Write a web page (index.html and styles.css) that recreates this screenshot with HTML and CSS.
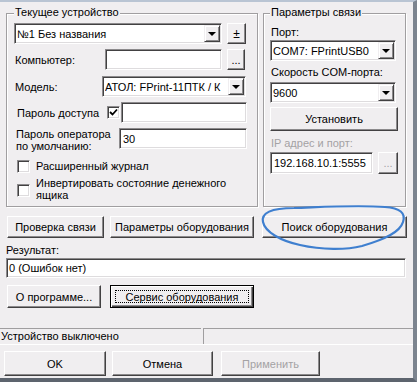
FILE: index.html
```html
<!DOCTYPE html>
<html lang="ru">
<head>
<meta charset="utf-8">
<title>Параметры устройства</title>
<link rel="stylesheet" href="styles.css">
</head>
<body>
<div class="window">
  <svg class="mark" width="417" height="382" viewBox="0 0 417 382" aria-hidden="true">
    <path d="M263 222 C261 213 271 208 294 208 C324 207 356 205 385 207 C400 208 406 213 403 222 C400 232 386 239 362 246 C346 250 322 250 300 245 C281 241 265 232 263 222 Z" fill="none" stroke="#3f7fcf" stroke-width="2.2" stroke-linejoin="round"/>
  </svg>

  <div class="top">
    <div class="group group-left">
      <div class="legend">Текущее устройство</div>
      <div class="row r1">
        <div class="field combo c-device"><span class="ftext">№1 Без названия</span><span class="combo-btn"><i class="tri"></i></span></div>
        <div class="btn b-pm">±</div>
      </div>
      <div class="row r2">
        <div class="lbl l-comp">Компьютер:</div>
        <div class="field f-comp"></div>
        <div class="btn b-dots">...</div>
      </div>
      <div class="row r3">
        <div class="lbl l-model">Модель:</div>
        <div class="field combo c-model"><span class="ftext">АТОЛ: FPrint-11ПТК / К</span><span class="combo-btn"><i class="tri"></i></span></div>
      </div>
      <div class="row r4">
        <div class="lbl l-pass">Пароль доступа</div>
        <span class="check checked"><svg width="9" height="9" viewBox="0 0 9 9"><path d="M1 4 L3.5 6.5 L8 1.5" fill="none" stroke="#000" stroke-width="1.8"/></svg></span>
        <div class="field f-pass"></div>
      </div>
      <div class="row r5">
        <div class="lbl l-oper">Пароль оператора<br>по умолчанию:</div>
        <div class="field f-oper">30</div>
      </div>
      <div class="row r6">
        <span class="check"></span>
        <div class="ctext">Расширенный журнал</div>
      </div>
      <div class="row r7">
        <span class="check c7"></span>
        <div class="ctext two">Инвертировать состояние денежного<br>ящика</div>
      </div>
    </div>

    <div class="group group-right">
      <div class="legend">Параметры связи</div>
      <div class="lbl l-port">Порт:</div>
      <div class="field combo c-port"><span class="ftext">COM7: FPrintUSB0</span><span class="combo-btn"><i class="tri"></i></span></div>
      <div class="lbl l-speed">Скорость COM-порта:</div>
      <div class="field combo c-speed"><span class="ftext">9600</span><span class="combo-btn"><i class="tri"></i></span></div>
      <div class="btn b-set">Установить</div>
      <div class="lbl l-ip disabled">IP адрес и порт:</div>
      <div class="row r-ip">
        <div class="field f-ip">192.168.10.1:5555</div>
        <div class="btn b-ipdots disabled">...</div>
      </div>
    </div>
  </div>

  <div class="btn-row row-a">
    <div class="btn b-check">Проверка связи</div>
    <div class="btn b-params">Параметры оборудования</div>
    <div class="btn b-search">Поиск оборудования</div>
  </div>

  <div class="lbl l-result">Результат:</div>
  <div class="field f-result">0 (Ошибок нет)</div>

  <div class="btn-row row-b">
    <div class="btn b-about">О программе...</div>
    <div class="btn default b-service"><span class="focus">Сервис оборудования</span></div>
  </div>

  <div class="statusbar">
    <div class="panel p1">Устройство выключено</div>
    <div class="panel p2"></div>
  </div>

  <div class="btn-row row-c">
    <div class="btn b-ok">OK</div>
    <div class="btn b-cancel">Отмена</div>
    <div class="btn b-apply disabled">Применить</div>
  </div>
</div>
</body>
</html>
```

FILE: styles.css
```css
html, body {
  margin: 0;
  padding: 0;
}
body {
  width: 417px;
  height: 382px;
  overflow: hidden;
  background: #f0eef0;
  font-family: "Liberation Sans", Arial, sans-serif;
  font-size: 11px;
  color: #000;
}
.window {
  position: relative;
  box-sizing: border-box;
  width: 417px;
  height: 382px;
  border-top: 2px solid #b9c4d3;
  border-right: 4px solid #7c848f;
  border-bottom: 4px solid #5d646e;
  background: #f0eef0;
}
.mark {
  position: absolute;
  left: 0;
  top: -2px;
  pointer-events: none;
  z-index: 5;
}

/* generic */
.row {
  display: flex;
  align-items: center;
}
.lbl {
  line-height: 14px;
  white-space: nowrap;
}
.disabled {
  color: #a4a2a4;
}
.field {
  box-sizing: border-box;
  background: #fff;
  border: 1px solid;
  border-color: #8c8a8c #ffffff #ffffff #8c8a8c;
  box-shadow: inset 1px 1px 0 #424142, inset -1px -1px 0 #dedcde;
  padding-left: 3px;
  display: flex;
  align-items: center;
  overflow: hidden;
  white-space: nowrap;
}
.combo {
  padding-left: 2px;
}
.ftext {
  flex: 1;
  overflow: hidden;
  white-space: nowrap;
}
.combo-btn {
  box-sizing: border-box;
  flex: none;
  width: 16px;
  height: 17px;
  margin-right: 1px;
  background: #f0eef0;
  border: 1px solid;
  border-color: #f0eef0 #424142 #424142 #f0eef0;
  box-shadow: inset 1px 1px 0 #fff, inset -1px -1px 0 #8c8a8c;
  display: flex;
  align-items: center;
  justify-content: center;
}
.tri {
  width: 0;
  height: 0;
  border-left: 4px solid transparent;
  border-right: 4px solid transparent;
  border-top: 4px solid #000;
  margin-top: 1px;
}
.btn {
  box-sizing: border-box;
  border: 1px solid;
  border-color: #ffffff #424142 #424142 #ffffff;
  box-shadow: inset -1px -1px 0 #8c8a8c;
  background: #f0eef0;
  display: flex;
  align-items: center;
  justify-content: center;
  white-space: nowrap;
  flex: none;
}
.btn.default {
  border: 1px solid #000;
  box-shadow: inset 1px 1px 0 #fff, inset -1px -1px 0 #424142, inset -2px -2px 0 #8c8a8c;
}
.focus {
  box-sizing: border-box;
  width: calc(100% - 8px);
  height: calc(100% - 8px);
  border: 1px dotted #000;
  display: flex;
  align-items: center;
  justify-content: center;
}
.check {
  box-sizing: border-box;
  flex: none;
  width: 13px;
  height: 13px;
  background: #fff;
  border: 1px solid;
  border-color: #8c8a8c #ffffff #ffffff #8c8a8c;
  box-shadow: inset 1px 1px 0 #424142, inset -1px -1px 0 #dedcde;
  display: flex;
  align-items: center;
  justify-content: center;
}

/* top section */
.top {
  display: flex;
  gap: 5px;
  padding: 11px 0 0 6px;
}
.group {
  box-sizing: border-box;
  height: 194px;
  border: 1px solid #a09ea0;
  box-shadow: inset 1px 1px 0 #fff, 1px 1px 0 #fff;
  display: flex;
  flex-direction: column;
  align-items: flex-start;
}
.group-left {
  width: 252px;
  padding-left: 7px;
}
.group-right {
  width: 143px;
  padding-left: 6px;
}
.legend {
  margin-top: -9px;
  padding: 0 1px;
  line-height: 14px;
  background: #f0eef0;
  white-space: nowrap;
}

.r1 { margin-top: 4px; }
.c-device { width: 208px; height: 21px; }
.b-pm { width: 19px; height: 21px; margin-left: 5px; font-size: 12px; }

.r2 { margin-top: 5px; }
.l-comp { width: 91px; padding-left: 1px; box-sizing: border-box; }
.f-comp { width: 117px; height: 21px; }
.b-dots { width: 18px; height: 21px; margin-left: 5px; }

.r3 { margin-top: 6px; }
.l-model { width: 88px; padding-left: 1px; box-sizing: border-box; }
.c-model { width: 144px; height: 21px; }

.r4 { margin-top: 5px; }
.l-pass { width: 93px; padding-left: 3px; box-sizing: border-box; }
.f-pass { width: 126px; height: 21px; margin-left: 1px; }

.r5 { margin-top: 5px; align-items: flex-start; }
.l-oper { width: 105px; padding-left: 2px; box-sizing: border-box; line-height: 12px; padding-top: 0; }
.f-oper { width: 128px; height: 21px; }

.r6 { margin-top: 8px; padding-left: 3px; }
.ctext { margin-left: 6px; line-height: 13px; white-space: nowrap; }

.r7 { margin-top: 4px; padding-left: 3px; align-items: flex-start; }
.c7 { margin-top: 7px; }
.ctext.two { line-height: 12px; }

.l-port { margin-top: 6px; padding-left: 1px; }
.c-port { width: 126px; height: 21px; margin-top: 1px; }
.l-speed { margin-top: 4px; padding-left: 1px; }
.c-speed { width: 126px; height: 21px; margin-top: 3px; }
.b-set { width: 128px; height: 24px; margin-top: 4px; }
.l-ip { margin-top: 5px; padding-left: 1px; }
.r-ip { margin-top: 2px; }
.f-ip { width: 103px; height: 22px; }
.b-ipdots { width: 20px; height: 22px; margin-left: 5px; }

/* buttons rows */
.btn-row {
  display: flex;
}
.row-a {
  margin-top: 9px;
  padding-left: 7px;
}
.row-a .btn { height: 22px; }
.b-check { width: 97px; }
.b-params { width: 144px; margin-left: 6px; }
.b-search { width: 145px; margin-left: 8px; }

.l-result {
  margin-top: 5px;
  padding-left: 6px;
}
.f-result {
  width: 400px;
  height: 20px;
  margin: 1px 0 0 6px;
  padding-left: 2px;
}

.row-b {
  margin-top: 7px;
  padding-left: 7px;
}
.row-b .btn { height: 23px; }
.b-about { width: 94px; }
.b-service { width: 144px; margin-left: 9px; }

.statusbar {
  margin-top: 20px;
  display: flex;
  gap: 2px;
  border-bottom: 1px solid #fff;
}
.panel {
  box-sizing: border-box;
  height: 16px;
  border-top: 1px solid #a09ea0;
  border-left: 1px solid #a09ea0;
  line-height: 14px;
  padding-left: 1px;
  white-space: nowrap;
}
.p1 { width: 201px; border-left: none; }
.p2 { flex: 1; }

.row-c {
  margin-top: 6px;
  padding-left: 4px;
}
.row-c .btn { height: 25px; }
.b-ok { width: 102px; }
.b-cancel { width: 101px; margin-left: 6px; }
.b-apply { width: 99px; margin-left: 8px; }
```
